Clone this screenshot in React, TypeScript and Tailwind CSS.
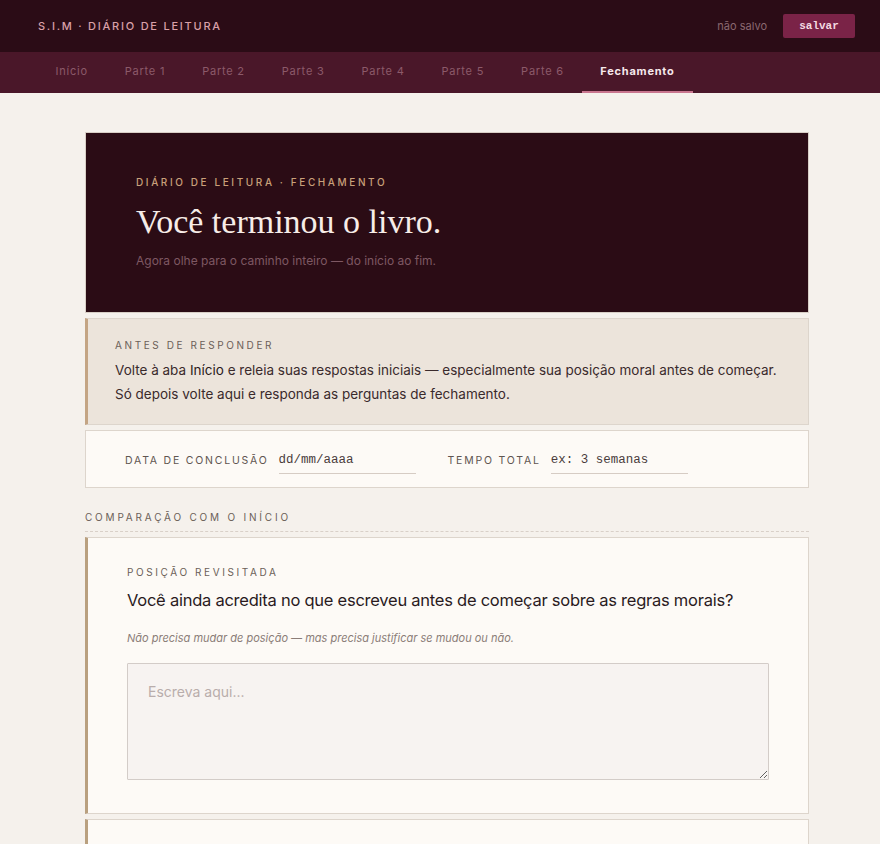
import React from "react";

const tabs = ["Início", "Parte 1", "Parte 2", "Parte 3", "Parte 4", "Parte 5", "Parte 6", "Fechamento"];

const sans = "font-['Inter','Noto_Sans',sans-serif]";

const App = () => {
  return (
    <div className={`min-h-screen bg-[#f5f1ec] ${sans}`}>
      {/* Top bar */}
      <header className="h-[52px] bg-[#2b0c16] flex items-center justify-between pl-[38px] pr-[25px]">
        <div className="text-[11px] tracking-[0.16em] text-[#d9a0a8] font-medium">
          S.I.M · DIÁRIO DE LEITURA
        </div>
        <div className="flex items-center gap-4">
          <span className="text-[11px] text-[#8a6870]">não salvo</span>
          <button className="h-[24px] w-[72px] rounded-[2px] bg-[#7a2347] text-[11px] font-bold text-[#f3dbe2] font-['Liberation_Mono',monospace]">
            salvar
          </button>
        </div>
      </header>

      {/* Tabs */}
      <nav className="h-[41px] bg-[#4a1729] flex pl-[37px]">
        {tabs.map((t) => {
          const active = t === "Fechamento";
          return (
            <div
              key={t}
              className={`flex items-center px-[18.5px] text-[11px] tracking-[0.07em] border-b-2 ${
                active
                  ? "border-[#c9768f] text-[#f6e9ec] font-bold tracking-[0.04em] px-[18px]"
                  : "border-transparent text-[#8c5a6a]"
              }`}
            >
              {t}
            </div>
          );
        })}
      </nav>

      <main className="w-[724px] ml-[85px] pt-[39px]">
        {/* Hero */}
        <section className="h-[181px] bg-[#2b0c15] pl-[50px] pt-[42px] border border-[#d8cfc6]">
          <div className="text-[10px] tracking-[0.26em] text-[#c9a07a] font-medium">
            DIÁRIO DE LEITURA · FECHAMENTO
          </div>
          <h1 className="mt-[12px] text-[34px] leading-[40px] text-[#f7ede8] font-['Liberation_Serif',serif]">
            Você terminou o livro.
          </h1>
          <p className="mt-[10px] text-[12px] text-[#7e5863]">
            Agora olhe para o caminho inteiro — do início ao fim.
          </p>
        </section>

        {/* Notice */}
        <section className="mt-[5px] bg-[#ece4db] border border-[#ddd5cc] border-l-[3px] border-l-[#c4a584] pl-[27px] pt-[19px] pb-[18px]">
          <div className="text-[10px] tracking-[0.26em] text-[#6b5f58]">ANTES DE RESPONDER</div>
          <p className="mt-[5px] text-[13.5px] leading-[24px] text-[#3a2a2c]">
            Volte à aba <span className="text-[#2a1a1c]">Início</span> e releia suas respostas iniciais — especialmente sua posição moral antes de começar.
            <br />
            Só depois volte aqui e responda as perguntas de fechamento.
          </p>
        </section>

        {/* Dates */}
        <section className="mt-[5px] h-[58px] bg-[#fdfaf6] border border-[#ddd5cc] flex items-center pl-[39px] pt-[3px] gap-[32px]">
          <div className="flex items-center gap-[10px]">
            <span className="text-[10.5px] tracking-[0.17em] text-[#5f5550]">DATA DE CONCLUSÃO</span>
            <div className="w-[137px] h-[26px] border-b border-[#d6ccc4] flex items-center pt-[1px] text-[12.5px] text-[#4a3c3c] font-['Liberation_Mono',monospace]">
              dd/mm/aaaa
            </div>
          </div>
          <div className="flex items-center gap-[10px]">
            <span className="text-[10.5px] tracking-[0.17em] text-[#5f5550]">TEMPO TOTAL</span>
            <div className="w-[137px] h-[26px] border-b border-[#d6ccc4] flex items-center pt-[1px] text-[12.5px] text-[#4a3c3c] font-['Liberation_Mono',monospace]">
              ex: 3 semanas
            </div>
          </div>
        </section>

        {/* Section heading */}
        <div className="mt-[22px] pb-[6px] border-b border-dashed border-[#d9d0c8] text-[10px] tracking-[0.28em] text-[#6b5f58]">
          COMPARAÇÃO COM O INÍCIO
        </div>

        {/* Question card */}
        <section className="mt-[5px] bg-[#fdfaf6] border border-[#ddd5cc] border-l-[3px] border-l-[#b9a07f] pl-[39px] pr-[39px] pt-[27px] pb-[33px]">
          <div className="text-[10px] tracking-[0.26em] text-[#6b5f58]">POSIÇÃO REVISITADA</div>
          <h2 className="mt-[8px] text-[16.5px] tracking-[-0.015em] leading-[24px] text-[#2a1a1e] whitespace-nowrap">
            Você ainda acredita no que escreveu antes de começar sobre as regras morais?
          </h2>
          <p className="mt-[18px] text-[11px] italic text-[#8b7d78]">
            Não precisa mudar de posição — mas precisa justificar se mudou ou não.
          </p>
          <textarea
            placeholder="Escreva aqui..."
            className="mt-[16px] block w-full h-[117px] bg-[#f7f3f1] border border-[#d3ccc8] rounded-[1px] px-[20px] pt-[17px] text-[14px] text-[#3a2a2c] placeholder:text-[#b9adab] outline-none"
          />
        </section>

        <section className="mt-[5px] h-[60px] bg-[#fdfaf6] border border-[#ddd5cc] border-l-[3px] border-l-[#b9a07f]" />
      </main>
    </div>
  );
};

export default App;
